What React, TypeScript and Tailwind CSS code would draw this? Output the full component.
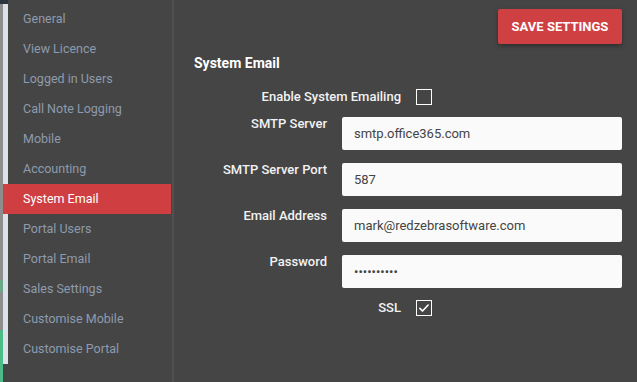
import React, { useState } from "react";

const navItems = [
  "General",
  "View Licence",
  "Logged in Users",
  "Call Note Logging",
  "Mobile",
  "Accounting",
  "System Email",
  "Portal Users",
  "Portal Email",
  "Sales Settings",
  "Customise Mobile",
  "Customise Portal",
];

const Checkbox: React.FC<{ checked: boolean; onChange: () => void }> = ({ checked, onChange }) => (
  <button
    onClick={onChange}
    className="w-4 h-4 border-[1.5px] border-white flex items-center justify-center"
  >
    {checked && (
      <svg viewBox="0 0 16 16" className="w-3 h-3" fill="none" stroke="white" strokeWidth="2.2" strokeLinecap="round" strokeLinejoin="round">
        <path d="M2.5 8.5 L6 12 L13.5 4" />
      </svg>
    )}
  </button>
);

export default function App() {
  const [active, setActive] = useState("System Email");
  const [enabled, setEnabled] = useState(false);
  const [ssl, setSsl] = useState(true);
  const [server, setServer] = useState("smtp.office365.com");
  const [port, setPort] = useState("587");
  const [email, setEmail] = useState("mark@redzebrasoftware.com");
  const [password, setPassword] = useState("0123456789");

  const fields = [
    { label: "SMTP Server", value: server, set: setServer, type: "text" },
    { label: "SMTP Server Port", value: port, set: setPort, type: "text" },
    { label: "Email Address", value: email, set: setEmail, type: "text" },
    { label: "Password", value: password, set: setPassword, type: "password" },
  ];

  return (
    <div className="w-[637px] h-[382px] flex bg-[#454545] overflow-hidden font-['Roboto',sans-serif]">
      {/* window edge strip */}
      <div className="w-[3px] flex flex-col">
        <div className="h-[4px] bg-[#2c3440]" />
        <div className="h-[276px] bg-[#8d8d8d]" />
        <div className="h-[12px] bg-[#6aa889]" />
        <div className="h-[38px] bg-[#8d8d8d]" />
        <div className="flex-1 bg-[#4dbb87]" />
      </div>

      {/* sidebar */}
      <div className="w-[168px] flex flex-col">
        <div className="h-[4px] flex">
          <div className="w-[5px] bg-[#2c3440]" />
          <div className="flex-1" />
        </div>
        <nav className="flex flex-col">
          {navItems.map((item) => (
            <button
              key={item}
              onClick={() => setActive(item)}
              className={`${
                active === item
                  ? "bg-[#cf3f41] border-[#cf3f41] text-white"
                  : "border-[#dbe2ea] text-[#8e9bad]"
              } h-[30px] border-l-[5px] pl-[15px] text-left text-[12.5px] leading-none`}
            >
              {item}
            </button>
          ))}
        </nav>
      </div>

      {/* divider */}
      <div className="w-[1px]" />
      <div className="w-[2px] bg-[#505050]" />

      {/* main */}
      <div className="flex-1 pl-[20px] pr-[15px] pt-[9px]">
        <div className="flex justify-end">
          <button className="w-[124px] h-[35px] bg-[#cf4043] rounded-[2px] text-white text-[13px] font-bold uppercase shadow-[0_2px_4px_rgba(0,0,0,0.35)]">
            Save Settings
          </button>
        </div>

        <h2 className="mt-[12px] text-[14px] font-bold text-white leading-[14px]">System Email</h2>

        <div className="mt-[19px] flex items-center h-[16px]">
          <div className="w-[207px] text-right text-[13px] font-medium text-[#f2f2f2]">Enable System Emailing</div>
          <div className="ml-[15px]">
            <Checkbox checked={enabled} onChange={() => setEnabled(!enabled)} />
          </div>
        </div>

        <div className="mt-[12px] flex flex-col gap-[13px]">
          {fields.map((f) => (
            <div key={f.label} className="flex items-start">
              <label className="w-[133px] text-right text-[13px] leading-[13px] font-medium text-[#f2f2f2]">{f.label}</label>
              <input
                type={f.type}
                value={f.value}
                onChange={(e) => f.set(e.target.value)}
                className="ml-[15px] flex-1 h-[33px] bg-[#fafafa] rounded-[2px] px-[12px] text-[13px] text-[#444] outline-none"
              />
            </div>
          ))}
        </div>

        <div className="mt-[12px] flex items-center h-[16px]">
          <div className="w-[207px] text-right text-[13px] font-medium text-[#f2f2f2]">SSL</div>
          <div className="ml-[15px]">
            <Checkbox checked={ssl} onChange={() => setSsl(!ssl)} />
          </div>
        </div>
      </div>
    </div>
  );
}
